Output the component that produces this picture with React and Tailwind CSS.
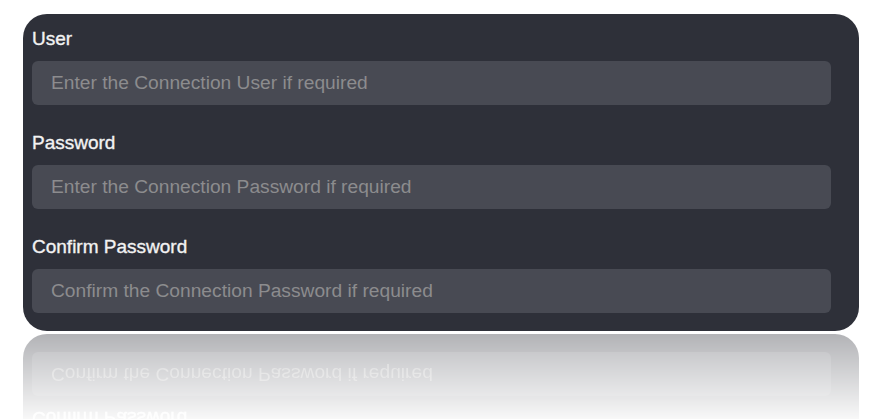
import React from "react";

const fields = [
  { label: "User", placeholder: "Enter the Connection User if required" },
  { label: "Password", placeholder: "Enter the Connection Password if required" },
  { label: "Confirm Password", placeholder: "Confirm the Connection Password if required" },
];

function Card({ reflected = false }) {
  return (
    <div
      className={
        "w-[836px] h-[317px] rounded-[24px] bg-[#2e3039] pt-[14px] pb-[18px] pl-[9px] pr-[28px] flex flex-col gap-[27px] " +
        (reflected ? "-scale-y-100" : "")
      }
    >
      {fields.map((f) => (
        <div key={f.label} className="flex flex-col gap-[11px]">
          <div className="h-[22px] leading-[22px] text-[19px] text-[#f2f2f2] [-webkit-text-stroke:0.35px_#f2f2f2]">
            {f.label}
          </div>
          <div className="h-[44px] rounded-[6px] bg-[#484a53] pl-[19px] flex items-center text-[19.2px] text-[#8c8c8e]">
            {f.placeholder}
          </div>
        </div>
      ))}
    </div>
  );
}

export default function App() {
  return (
    <div
      className="w-[886px] h-[419px] bg-white overflow-hidden pl-[23px] pt-[14px]"
      style={{ fontFamily: '"Liberation Sans", Arial, sans-serif' }}
    >
      <Card />
      <div className="mt-[3px] h-[85px] w-[836px] overflow-hidden [mask-image:linear-gradient(to_bottom,rgba(0,0,0,0.37),rgba(0,0,0,0.03))]">
        <Card reflected />
      </div>
    </div>
  );
}
